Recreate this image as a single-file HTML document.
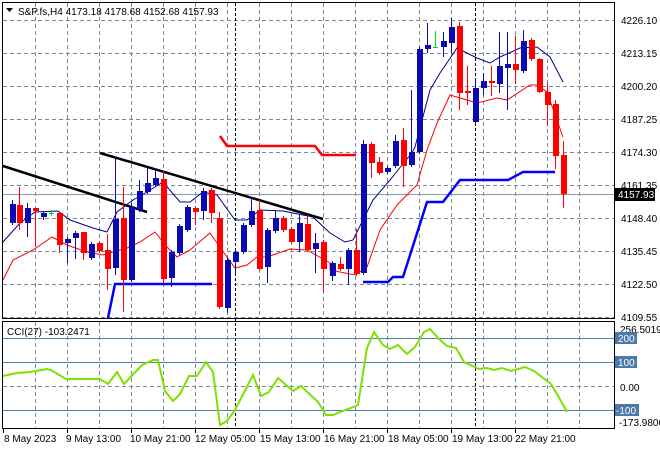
<!DOCTYPE html><html><head><style>
body{margin:0;background:#fff;width:660px;height:450px;overflow:hidden;font-family:"Liberation Sans",sans-serif}
svg text{font-family:"Liberation Sans",sans-serif;font-size:10px;fill:#000}
</style></head><body>
<svg width="660" height="450" viewBox="0 0 660 450" xmlns="http://www.w3.org/2000/svg">
<g stroke="#778899" stroke-width="1" stroke-dasharray="4,3" fill="none">
<path d="M3 20.5H614M3 53.5H614M3 86.5H614M3 119.5H614M3 152.5H614M3 185.5H614M3 218.5H614M3 251.5H614M3 284.5H614M3 317.5H614"/>
<path d="M35.5 3V318M67.5 3V318M99.5 3V318M131.5 3V318M163.5 3V318M195.5 3V318M227.5 3V318M259.5 3V318M291.5 3V318M323.5 3V318M355.5 3V318M387.5 3V318M419.5 3V318M451.5 3V318M483.5 3V318M515.5 3V318M547.5 3V318M579.5 3V318"/>
<path d="M35.5 322V428M67.5 322V428M99.5 322V428M131.5 322V428M163.5 322V428M195.5 322V428M227.5 322V428M259.5 322V428M291.5 322V428M323.5 322V428M355.5 322V428M387.5 322V428M419.5 322V428M451.5 322V428M483.5 322V428M515.5 322V428M547.5 322V428M579.5 322V428M3 386.5H614"/>
</g>
<g stroke="#000" stroke-dasharray="3,2"><path d="M235.5 3V428M475.5 3V428"/></g>
<path d="M3 194.5H614" stroke="#8899aa"/>
<g stroke="#4a80b0"><path d="M3 338.5H614M3 362.5H614M3 410.5H614"/></g>
<rect x="2.5" y="2.5" width="612" height="316" fill="none" stroke="#000"/>
<rect x="2.5" y="321.5" width="612" height="107" fill="none" stroke="#000"/>
<path d="M3 166L147 212M100 153L323 219" stroke="#000" stroke-width="2.5"/>
<path d="M220 136L227 146H315L322 155H356" stroke="#f00" stroke-width="2.5" fill="none"/>
<path d="M108 318L115 284H212M363 282H388L393 277H403L427 202H443L460 180H508L523 172H555" stroke="#0000ff" stroke-width="2.5" fill="none"/>
<polyline fill="none" stroke="#00008b" stroke-width="1" points="3,242 20,223 35,212 58,211 70,220 93,228 107,232 117,212 133,200 147,192 163,182 180,202 190,202 203,192 217,195 235,220 247,220 260,210 283,211 313,217 330,233 345,242 353,240 363,220 373,200 390,180 402,165 412,153 415,147 430,90 440,73 457,48 477,58 490,63 500,57 520,48 537,47 550,57 563,82"/>
<polyline fill="none" stroke="#f00" stroke-width="1" points="3,280 13,260 33,250 52,237 67,245 87,252 103,255 113,252 127,248 140,242 155,232 167,247 177,257 190,250 210,233 222,250 235,268 247,265 257,257 267,257 290,249 307,250 330,263 330,270 355,275 367,267 380,230 397,205 417,185 427,150 437,123 450,95 467,100 477,103 497,98 507,100 530,85 537,85 547,92 563,137"/>
<g stroke-width="1">
<path stroke="#0a0ab4" d="M12.5 200V225M27.5 203V237M43.5 211V220M67.5 237V263M75.5 231V259M91.5 242V260M115.5 157V275M131.5 203V282M139.5 180V212M147.5 168V194M155.5 168V187M171.5 250V287M179.5 224V255M187.5 205V232M203.5 188V220M227.5 258V313M235.5 250V273M243.5 223V254M251.5 197V227M267.5 228V283M275.5 210V233M299.5 215V252M315.5 233V273M332.5 261V281M348.5 248V285M363.5 140V275M387.5 166V174M395.5 135V168M411.5 90V167M419.5 47V154M427.5 23V53M443.5 32V57M451.5 18V53M475.5 78V124M483.5 73V95M499.5 32V93M507.5 32V110M523.5 30V73"/>
<path stroke="#f00" d="M19.5 187V230M35.5 208V247M59.5 213V253M83.5 232V260M99.5 241V253M107.5 234V290M123.5 187V312M163.5 171V283M195.5 206V225M211.5 188V223M219.5 212V309M259.5 200V271M283.5 216V232M291.5 227V244M307.5 215V252M323.5 240V292M340.5 257V271M356.5 229V276M371.5 142V178M379.5 157V175M403.5 128V187M459.5 22V110M467.5 66V105M491.5 66V96M515.5 36V84M531.5 38V61M539.5 58V93M547.5 83V126M555.5 100V169M563.5 141V208"/>
<path stroke="#00e000" d="M51.5 210V216M49 213.5H54M435.5 31V48M433 47.5H438"/>
</g>
<g fill="#0a0ab4">
<rect x="10" y="204" width="6" height="19"/><rect x="25" y="208" width="6" height="15"/><rect x="41" y="213" width="6" height="4"/><rect x="65" y="239" width="6" height="4"/><rect x="73" y="233" width="6" height="5"/><rect x="89" y="244" width="6" height="14"/><rect x="113" y="219" width="6" height="49"/><rect x="129" y="207" width="6" height="73"/><rect x="137" y="191" width="6" height="19"/><rect x="145" y="183" width="6" height="9"/><rect x="153" y="178" width="6" height="7"/><rect x="169" y="252" width="6" height="26"/><rect x="177" y="226" width="6" height="27"/><rect x="185" y="207" width="6" height="23"/><rect x="201" y="191" width="6" height="20"/><rect x="225" y="260" width="6" height="48"/><rect x="233" y="252" width="6" height="10"/><rect x="241" y="225" width="6" height="27"/><rect x="249" y="211" width="6" height="14"/><rect x="265" y="230" width="6" height="37"/><rect x="273" y="218" width="6" height="13"/><rect x="297" y="223" width="6" height="19"/><rect x="313" y="243" width="6" height="6"/><rect x="330" y="263" width="6" height="13"/><rect x="346" y="250" width="6" height="19"/><rect x="361" y="144" width="6" height="129"/><rect x="385" y="168" width="6" height="4"/><rect x="393" y="141" width="6" height="25"/><rect x="409" y="152" width="6" height="13"/><rect x="417" y="49" width="6" height="103"/><rect x="425" y="45" width="6" height="4"/><rect x="441" y="41" width="6" height="6"/><rect x="449" y="27" width="6" height="16"/><rect x="473" y="88" width="6" height="34"/><rect x="481" y="81" width="6" height="7"/><rect x="497" y="66" width="6" height="18"/><rect x="505" y="64" width="6" height="4"/><rect x="521" y="41" width="6" height="30"/>
</g>
<g fill="#f00">
<rect x="17" y="205" width="6" height="18"/><rect x="33" y="208" width="6" height="3"/><rect x="57" y="213" width="6" height="32"/><rect x="81" y="232" width="6" height="21"/><rect x="97" y="243" width="6" height="8"/><rect x="105" y="250" width="6" height="19"/><rect x="121" y="218" width="6" height="62"/><rect x="161" y="179" width="6" height="100"/><rect x="193" y="208" width="6" height="4"/><rect x="209" y="190" width="6" height="23"/><rect x="217" y="218" width="6" height="89"/><rect x="257" y="210" width="6" height="59"/><rect x="281" y="218" width="6" height="12"/><rect x="289" y="229" width="6" height="13"/><rect x="305" y="224" width="6" height="26"/><rect x="321" y="242" width="6" height="27"/><rect x="338" y="264" width="6" height="5"/><rect x="354" y="250" width="6" height="24"/><rect x="369" y="144" width="6" height="19"/><rect x="377" y="162" width="6" height="11"/><rect x="401" y="140" width="6" height="26"/><rect x="457" y="26" width="6" height="67"/><rect x="465" y="91" width="6" height="2"/><rect x="489" y="81" width="6" height="2"/><rect x="513" y="64" width="6" height="6"/><rect x="529" y="40" width="6" height="19"/><rect x="537" y="59" width="6" height="33"/><rect x="545" y="92" width="6" height="13"/><rect x="553" y="104" width="6" height="52"/><rect x="561" y="155" width="6" height="39"/>
</g>
<polyline fill="none" stroke="#7fe000" stroke-width="2" points="3,376 17,373 30,372 47,369 51,370 66,379 72,379 100,379 108,384 117,372 124,384 142,365 153,360 158,360 165,391 173,401 180,394 189,376 197,376 206,362 213,372 220,425 227,421 235,410 253,375 261,396 269,392 278,378 293,391 301,386 318,402 326,415 333,415 358,405 367,348 374,332 383,345 390,349 398,345 407,354 415,347 424,332 430,329 439,339 447,346 456,348 464,362 479,369 487,368 494,370 502,368 511,371 525,367 534,371 551,384 557,394 567,412"/>
<path d="M6 8H13L9.5 12Z" fill="#000"/>
<text x="18" y="15">S&amp;P.fs,H4  4173.18 4178.68 4152.68 4157.93</text>
<text x="7" y="335">CCI(27) -103.2471</text>
<g>
<text x="621" y="24">4226.10</text><text x="621" y="57">4213.15</text><text x="621" y="90">4200.20</text><text x="621" y="123">4187.25</text><text x="621" y="156">4174.30</text><text x="621" y="189">4161.35</text><text x="621" y="222">4148.40</text><text x="621" y="255">4135.45</text><text x="621" y="288">4122.50</text><text x="621" y="321">4109.55</text>
</g>
<rect x="615" y="188" width="40" height="13" fill="#000"/>
<text x="618" y="198" style="fill:#fff">4157.93</text>
<text x="620" y="333">256.5019</text>
<rect x="615" y="332" width="22" height="12" fill="#4a7aa8"/><text x="618" y="342" style="fill:#fff">200</text>
<rect x="615" y="356" width="22" height="12" fill="#4a7aa8"/><text x="618" y="366" style="fill:#fff">100</text>
<text x="620" y="391">0.00</text>
<rect x="615" y="404" width="24" height="12" fill="#4a7aa8"/><text x="616" y="414" style="fill:#fff">-100</text>
<text x="619" y="426">-173.9806</text>
<g stroke="#000"><path d="M614.5 20V24M614.5 53V57M614.5 86V90M614.5 119V123M614.5 152V156M614.5 185V189M614.5 218V222M614.5 251V255M614.5 284V288M3.5 429V433M67.5 429V433M131.5 429V433M195.5 429V433M259.5 429V433M323.5 429V433M387.5 429V433M451.5 429V433M515.5 429V433"/></g>
<g>
<text x="4" y="442">8 May 2023</text><text x="66" y="442">9 May 13:00</text><text x="130" y="442">10 May 21:00</text><text x="195" y="442">12 May 05:00</text><text x="260" y="442">15 May 13:00</text><text x="324" y="442">16 May 21:00</text><text x="388" y="442">18 May 05:00</text><text x="452" y="442">19 May 13:00</text><text x="515" y="442">22 May 21:00</text>
</g>
</svg>
</body></html>
